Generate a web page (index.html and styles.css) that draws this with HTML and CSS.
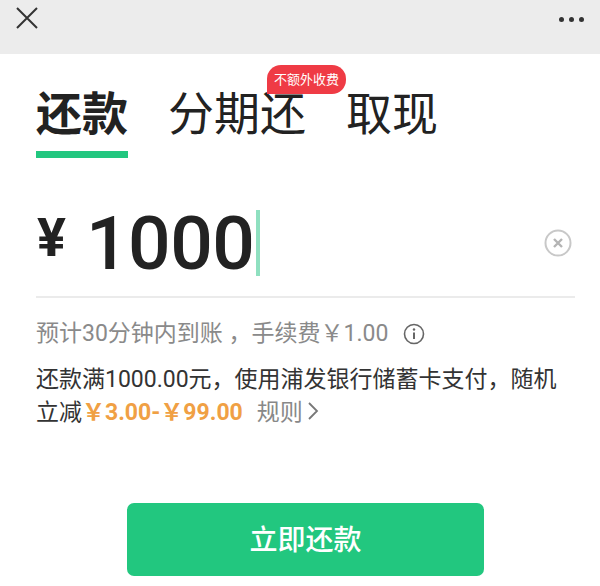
FILE: index.html

```html
<!DOCTYPE html>
<html lang="zh-CN">
<head>
  <meta charset="UTF-8">
  <title>还款</title>
  <link rel="stylesheet" href="styles.css">
</head>
<body>

<header class="topbar">
  <svg class="close" width="24" height="24" viewBox="0 0 24 24"><path d="M2 2 L22 22 M22 2 L2 22" stroke="#333" stroke-width="2" fill="none"/></svg>
  <div class="dots"><span></span><span></span><span></span></div>
</header>

<nav class="tabs">
  <a class="tab active">还款</a>
  <a class="tab">分期还<span class="badge">不额外收费</span></a>
  <a class="tab">取现</a>
</nav>

<div class="amount">
  <span class="currency">¥</span>
  <span class="value">1000</span>
  <span class="caret"></span>
  <svg class="clear" width="28" height="28" viewBox="0 0 28 28"><circle cx="14" cy="14" r="12.5" stroke="#c8c8c8" stroke-width="2" fill="none"/><path d="M10 10 L18 18 M18 10 L10 18" stroke="#b4b4b4" stroke-width="2.4" fill="none"/></svg>
</div>

<div class="fee">
  <span>预计30分钟内到账 ，手续费￥1.00</span>
  <svg class="info" width="22" height="22" viewBox="0 0 22 22"><circle cx="11" cy="11" r="9.5" stroke="#666" stroke-width="1.6" fill="none"/><path d="M11 9.5 V16" stroke="#666" stroke-width="2" fill="none"/><circle cx="11" cy="6.5" r="1.2" fill="#666"/></svg>
</div>

<p class="promo">还款满1000.00元，使用浦发银行储蓄卡支付，随机<br>立减<b class="range">￥3.00-￥99.00</b><span class="rule">规则<svg class="chevron" width="12" height="18" viewBox="0 0 12 18"><path d="M2 1 L10 9 L2 17" stroke="#777" stroke-width="1.8" fill="none"/></svg></span></p>

<div class="action">
  <button class="pay">立即还款</button>
</div>

</body>
</html>
```

FILE: styles.css

```css
body {
  margin: 0;
  height: 586px;
  overflow: hidden;
  background-color: #fff;
  font-family: "Roboto", "Noto Sans CJK SC", sans-serif;
  color: #222;
}
.topbar {
  display: flex;
  justify-content: space-between;
  height: 54px;
  padding: 6px 16px 0 15px;
  box-sizing: border-box;
  background-color: #ececec;
}
.dots {
  display: flex;
  gap: 5px;
  margin-top: 11px;
}
.dots span {
  width: 5px;
  height: 5px;
  border-radius: 50%;
  background-color: #333;
}
.tabs {
  display: flex;
  gap: 40px;
  margin: 32px 0 0 36px;
}
.tab {
  position: relative;
  height: 65px;
  font-size: 46px;
  line-height: 56px;
}
.active {
  font-weight: 700;
  border-bottom: 7px solid #22c77f;
}
.badge {
  position: absolute;
  top: -21px;
  right: -40px;
  padding: 0 7px;
  background-color: #ef3b45;
  color: #fff;
  font-size: 13px;
  line-height: 29px;
  border-radius: 14px 14px 14px 0;
}
.amount {
  display: flex;
  align-items: center;
  height: 95px;
  padding-bottom: 6px;
  margin: 37px 25px 0 36px;
  border-bottom: 2px solid #ebebeb;
}
.currency {
  font-size: 54px;
  font-weight: 700;
  margin: -10px 20px 0 1px;
}
.value {
  font-family: "Roboto", sans-serif;
  font-size: 75px;
  font-weight: 500;
  letter-spacing: -0.5px;
}
.caret {
  width: 4px;
  height: 66px;
  margin-left: 2px;
  background-color: #8fe0c0;
}
.clear {
  margin: 0 3px 0 auto;
}
.fee {
  display: flex;
  align-items: center;
  gap: 15px;
  margin: 20px 0 0 36px;
  font-size: 23px;
  line-height: 32px;
  color: #8a8a8a;
}
.promo {
  margin: 13px 0 0 36px;
  font-size: 23px;
  line-height: 33px;
  color: #333;
}
.range {
  color: #f0a044;
}
.rule {
  margin-left: 14px;
  color: #888;
}
.chevron {
  margin-left: 4px;
}
.action {
  display: flex;
  margin: 74px 0 0 127px;
}
.pay {
  width: 357px;
  height: 73px;
  padding-bottom: 4px;
  border: 0;
  border-radius: 7px;
  background-color: #22c77f;
  color: #fff;
  font-family: inherit;
  font-size: 28px;
  font-weight: 500;
}
```
